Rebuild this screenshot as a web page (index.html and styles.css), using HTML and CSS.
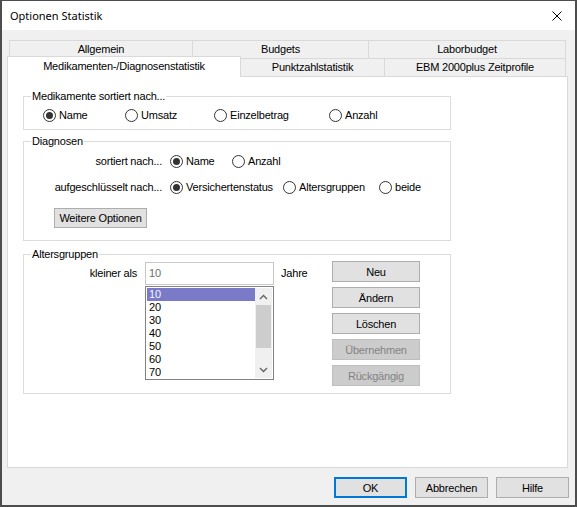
FILE: index.html
```html
<!DOCTYPE html>
<html lang="de">
<head>
  <meta charset="UTF-8">
  <title>Optionen Statistik</title>
  <link rel="stylesheet" href="styles.css">
</head>
<body>
  <div class="window">
    <!-- Title bar -->
    <div class="titlebar">
      <span class="title">Optionen Statistik</span>
      <svg class="close" width="10" height="10" viewBox="0 0 10 10">
        <path d="M0.5 0.5L9.5 9.5M9.5 0.5L0.5 9.5" stroke="#000" stroke-width="1" fill="none"/>
      </svg>
    </div>

    <div class="dialog">
      <!-- Tabs -->
      <div class="tab-row tab-row-back">
        <div class="tab tab-allgemein">Allgemein</div>
        <div class="tab tab-budgets">Budgets</div>
        <div class="tab tab-labor">Laborbudget</div>
      </div>
      <div class="tab-row tab-row-front">
        <div class="tab tab-active">Medikamenten-/Diagnosenstatistik</div>
        <div class="tab tab-punkte">Punktzahlstatistik</div>
        <div class="tab tab-ebm">EBM 2000plus Zeitprofile</div>
      </div>

      <div class="panel">
        <!-- Medikamente -->
        <div class="group group-sort">
          <div class="group-title">Medikamente sortiert nach...</div>
          <div class="sort-options">
            <label class="radio checked"><span class="radio-mark"></span>Name</label>
            <label class="radio"><span class="radio-mark"></span>Umsatz</label>
            <label class="radio"><span class="radio-mark"></span>Einzelbetrag</label>
            <label class="radio"><span class="radio-mark"></span>Anzahl</label>
          </div>
        </div>

        <!-- Diagnosen -->
        <div class="group group-diag">
          <div class="group-title">Diagnosen</div>
          <div class="option-row first">
            <span class="option-label">sortiert nach...</span>
            <label class="radio checked diag-name"><span class="radio-mark"></span>Name</label>
            <label class="radio"><span class="radio-mark"></span>Anzahl</label>
          </div>
          <div class="option-row">
            <span class="option-label">aufgeschlüsselt nach...</span>
            <label class="radio checked diag-status"><span class="radio-mark"></span>Versichertenstatus</label>
            <label class="radio diag-alter"><span class="radio-mark"></span>Altersgruppen</label>
            <label class="radio"><span class="radio-mark"></span>beide</label>
          </div>
          <button class="btn btn-more">Weitere Optionen</button>
        </div>

        <!-- Altersgruppen -->
        <div class="group group-age">
          <div class="group-title">Altersgruppen</div>
          <div class="age-row">
            <span class="age-label">kleiner als</span>
            <div class="age-fields">
              <div class="textbox">10</div>
              <div class="listbox">
                <div class="list-items">
                  <div class="list-item selected">10</div>
                  <div class="list-item">20</div>
                  <div class="list-item">30</div>
                  <div class="list-item">40</div>
                  <div class="list-item">50</div>
                  <div class="list-item">60</div>
                  <div class="list-item">70</div>
                </div>
                <div class="scrollbar">
                  <div class="scroll-btn">
                    <svg width="9" height="6" viewBox="0 0 9 6"><path d="M1 5L4.5 1.5L8 5" stroke="#606060" stroke-width="1.3" fill="none"/></svg>
                  </div>
                  <div class="scroll-thumb"></div>
                  <div class="scroll-track"></div>
                  <div class="scroll-btn">
                    <svg width="9" height="6" viewBox="0 0 9 6"><path d="M1 1L4.5 4.5L8 1" stroke="#606060" stroke-width="1.3" fill="none"/></svg>
                  </div>
                </div>
              </div>
            </div>
            <span class="age-unit">Jahre</span>
            <div class="age-buttons">
              <button class="btn">Neu</button>
              <button class="btn">Ändern</button>
              <button class="btn">Löschen</button>
              <button class="btn" disabled>Übernehmen</button>
              <button class="btn" disabled>Rückgängig</button>
            </div>
          </div>
        </div>
      </div>

      <!-- Dialog buttons -->
      <div class="dialog-buttons">
        <button class="btn btn-dialog btn-default">OK</button>
        <button class="btn btn-dialog">Abbrechen</button>
        <button class="btn btn-dialog">Hilfe</button>
      </div>
    </div>
  </div>
</body>
</html>
```

FILE: styles.css
```css
body {
  margin: 0;
  font-family: "Liberation Sans", Arial, sans-serif;
  font-size: 11px;
  letter-spacing: -0.2px;
  color: #000;
}

.window {
  width: 577px;
  height: 507px;
  box-sizing: border-box;
  border: solid #4d4d4d;
  border-width: 1px 2px 2px 2px;
  background: #f0f0f0;
  display: flex;
  flex-direction: column;
}

/* Title bar */
.titlebar {
  height: 29px;
  flex: none;
  background: #fff;
  display: flex;
  align-items: center;
  justify-content: space-between;
  padding: 0 13px 0 8px;
}

.title {
  font-family: "Noto Sans", "Open Sans", sans-serif;
  font-size: 11px;
  letter-spacing: 0;
}

.dialog {
  flex: 1;
  display: flex;
  flex-direction: column;
  padding: 10px 0 0 5px;
}

/* Tabs */
.tab-row {
  display: flex;
  height: 18px;
  align-items: flex-start;
}

.tab-row-back {
  margin-left: 2px;
}

.tab {
  box-sizing: border-box;
  height: 18px;
  border-top: 1px solid #d9d9d9;
  border-left: 1px solid #d9d9d9;
  background: #f0f0f0;
  text-align: center;
  line-height: 17px;
  white-space: nowrap;
}

.tab-allgemein { width: 183px; }
.tab-budgets { width: 176px; }
.tab-labor { width: 198px; border-right: 1px solid #d9d9d9; }

.tab-active {
  position: relative;
  z-index: 1;
  width: 234px;
  height: 21px;
  margin-top: -2px;
  border-right: 1px solid #d9d9d9;
  background: #fff;
  line-height: 19px;
}

.tab-punkte { width: 143px; border-left: none; }
.tab-ebm { width: 182px; border-right: 1px solid #d9d9d9; }

/* Panel */
.panel {
  box-sizing: border-box;
  width: 561px;
  height: 392px;
  border: 1px solid #d9d9d9;
  background: #fff;
  padding: 19px 0 0 15px;
}

.group {
  box-sizing: border-box;
  width: 428px;
  border: 1px solid #dcdcdc;
}

.group-title {
  width: fit-content;
  margin: -7px 0 0 7px;
  padding: 0 1px;
  background: #fff;
  line-height: 13px;
}

.group-sort { height: 34px; }
.group-diag { height: 100px; margin-top: 11px; }
.group-age { height: 140px; margin-top: 13px; }

/* Radio buttons */
.radio {
  display: flex;
  align-items: center;
  height: 13px;
  line-height: 13px;
  white-space: nowrap;
}

.radio-mark {
  box-sizing: border-box;
  width: 13px;
  height: 13px;
  flex: none;
  border: 1px solid #333;
  border-radius: 50%;
  background: #fff;
  margin-right: 3px;
  display: flex;
  align-items: center;
  justify-content: center;
}

.radio.checked .radio-mark::after {
  content: "";
  width: 7px;
  height: 7px;
  border-radius: 50%;
  background: #333;
}

.sort-options {
  display: grid;
  grid-template-columns: 82px 89px 115px auto;
  margin: 6px 0 0 19px;
}

.option-row {
  display: flex;
  height: 13px;
  margin-top: 13px;
}

.option-row.first {
  margin-top: 7px;
}

.option-label {
  width: 138px;
  margin-right: 8px;
  text-align: right;
  line-height: 13px;
}

.diag-name { width: 62px; }
.diag-status { width: 113px; }
.diag-alter { width: 96px; }

/* Buttons */
.btn {
  box-sizing: border-box;
  height: 21px;
  padding: 0;
  border: 1px solid #adadad;
  background: #e1e1e1;
  font-family: inherit;
  font-size: 11px;
  letter-spacing: -0.2px;
  color: #000;
}

.btn:disabled {
  border-color: #bfbfbf;
  background: #cccccc;
  color: #838383;
}

.btn-more {
  display: block;
  width: 93px;
  height: 20px;
  margin: 14px 0 0 30px;
}

/* Altersgruppen */
.age-row {
  display: flex;
  align-items: flex-start;
}

.age-label {
  width: 113px;
  margin: 1px 8px 0 0;
  text-align: right;
  line-height: 23px;
}

.age-fields {
  width: 129px;
  margin-top: 1px;
  display: flex;
  flex-direction: column;
  gap: 1px;
}

.textbox {
  box-sizing: border-box;
  height: 23px;
  border: 1px solid #c8c8c8;
  background: #fff;
  padding-left: 3px;
  line-height: 21px;
  color: #6d6d6d;
}

.listbox {
  box-sizing: border-box;
  height: 94px;
  border: 1px solid #828282;
  padding: 1px;
  display: flex;
  background: #fff;
}

.list-items {
  width: 108px;
  overflow: hidden;
}

.list-item {
  height: 13px;
  line-height: 13px;
  padding-left: 2px;
}

.list-item.selected {
  background: #7a7ac8;
  color: #f4f4ff;
}

.scrollbar {
  width: 17px;
  display: flex;
  flex-direction: column;
  background: #f0f0f0;
}

.scroll-btn {
  height: 17px;
  flex: none;
  display: flex;
  align-items: center;
  justify-content: center;
}

.scroll-thumb {
  height: 43px;
  margin: 0 1px;
  background: #cdcdcd;
}

.scroll-track {
  flex: 1;
}

.age-unit {
  width: 51px;
  margin: 1px 0 0 7px;
  line-height: 23px;
}

.age-buttons {
  width: 88px;
  display: flex;
  flex-direction: column;
  gap: 5px;
}

/* Dialog buttons */
.dialog-buttons {
  display: flex;
  justify-content: flex-end;
  gap: 8px;
  margin-top: 9px;
  padding-right: 6px;
}

.btn-dialog {
  width: 73px;
}

.btn-default {
  border: 2px solid #0078d7;
}
```
